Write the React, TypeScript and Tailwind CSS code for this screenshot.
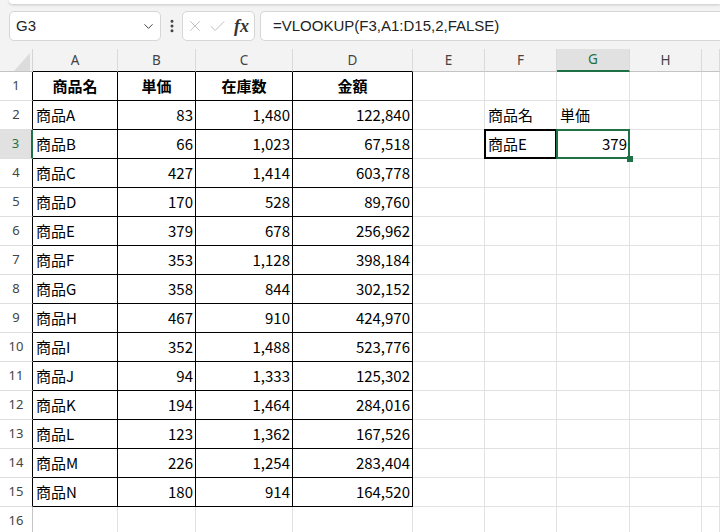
import React from 'react';
import { ChevronDown, EllipsisVertical, X, Check } from 'lucide-react';

// Sheet: VLOOKUP example

const COLS = ['A', 'B', 'C', 'D', 'E', 'F', 'G', 'H', ''];
const GRID = 'grid grid-cols-[33px_85px_78px_97px_120px_72px_72px_73px_72px_1fr]';

const DATA: [string, string, string, string][] = [
  ['商品A', '83', '1,480', '122,840'],
  ['商品B', '66', '1,023', '67,518'],
  ['商品C', '427', '1,414', '603,778'],
  ['商品D', '170', '528', '89,760'],
  ['商品E', '379', '678', '256,962'],
  ['商品F', '353', '1,128', '398,184'],
  ['商品G', '358', '844', '302,152'],
  ['商品H', '467', '910', '424,970'],
  ['商品I', '352', '1,488', '523,776'],
  ['商品J', '94', '1,333', '125,302'],
  ['商品K', '194', '1,464', '284,016'],
  ['商品L', '123', '1,362', '167,526'],
  ['商品M', '226', '1,254', '283,404'],
  ['商品N', '180', '914', '164,520'],
];

const FONT = "font-['Noto_Sans_CJK_JP','Noto_Sans',sans-serif]";

function FormulaBar() {
  return (
    <div className="h-[49px] flex flex-col">
      <div className="ml-[9px] h-[4px] bg-white rounded-bl-[6px] shadow-[0_1px_3px_rgba(0,0,0,0.18)]" />
      <div className="flex items-center mt-[7px] h-[30px]">
        <div className="ml-[9px] w-[152px] h-full bg-white border border-[#d6d6d6] rounded-[5px] flex items-center justify-between pl-[6px] pr-[4px]">
          <span className="text-[15px] text-[#222] font-['Liberation_Sans',sans-serif]">G3</span>
          <ChevronDown size={15} strokeWidth={1.6} className="text-[#444]" />
        </div>
        <div className="w-[21px] flex justify-center">
          <EllipsisVertical size={16} strokeWidth={2.5} className="text-[#444]" />
        </div>
        <div className="w-[73px] h-full bg-white border border-[#d6d6d6] rounded-[5px] flex items-center pl-[3px] gap-[4px]">
          <X size={18} strokeWidth={1.1} className="text-[#b5b5b5]" />
          <Check size={19} strokeWidth={1.1} className="text-[#b5b5b5]" />
          <span className="ml-[3px] text-[18px] italic font-bold text-[#333] font-['Liberation_Serif',serif] leading-none">fx</span>
        </div>
        <div className="ml-[5px] flex-1 h-full bg-white border border-r-0 border-[#d6d6d6] rounded-l-[5px] flex items-center pl-[12px]">
          <span className="text-[15px] text-[#222] font-['Liberation_Sans',sans-serif]">=VLOOKUP(F3,A1:D15,2,FALSE)</span>
        </div>
      </div>
    </div>
  );
}

function ColumnHeader() {
  return (
    <div className={`${GRID} h-[23px]`}>
      <div className="relative border-b border-[#c4c4c4] border-r border-r-[#d4d4d4] overflow-hidden">
        <div className="absolute left-[14px] bottom-0 w-0 h-0 border-l-[16px] border-l-transparent border-b-[18px] border-b-[#dcdcdc]" />
      </div>
      {COLS.map((c, i) => {
        const black = i < 4;
        const sel = c === 'G';
        return (
          <div
            key={i}
            className={`flex items-center justify-center text-[13.5px] font-['Noto_Sans',sans-serif] border-r border-r-[#dadada] ${
              sel
                ? 'bg-[#e1e1e1] text-[#1e7145] border-b-2 border-b-[#1e7145]'
                : black
                ? 'text-[#444] border-b border-b-black'
                : 'text-[#444] border-b border-b-[#c4c4c4]'
            }`}
          >
            {c}
          </div>
        );
      })}
    </div>
  );
}

function Cell({
  children,
  align = 'left',
  inTable,
  bold,
  overlay,
}: {
  children?: React.ReactNode;
  align?: 'left' | 'right' | 'center';
  inTable?: boolean;
  bold?: boolean;
  overlay?: 'black' | 'green';
}) {
  return (
    <div
      className={`relative flex items-center text-[15px] text-black whitespace-nowrap border-r border-b ${
        inTable ? 'border-black' : 'border-[#e1e1e1]'
      } ${align === 'right' ? 'justify-end pr-[2px]' : align === 'center' ? 'justify-center' : 'pl-[3px]'} ${
        bold ? 'font-bold' : ''
      }`}
    >
      {children}
      {overlay === 'black' && <div className="absolute inset-[-1px] border-2 border-black" />}
      {overlay === 'green' && (
        <div className="absolute z-10 inset-[-1px] border-2 border-[#1e7145]">
          <div className="absolute right-[-5px] bottom-[-5px] w-[6px] h-[6px] bg-[#1e7145]" />
        </div>
      )}
    </div>
  );
}

function Row({ n }: { n: number }) {
  const sel = n === 3;
  const inTable = n <= 15;
  const item = n >= 2 && n <= 15 ? DATA[n - 2] : null;

  return (
    <div className={`${GRID} h-[29px]`}>
      <div
        className={`flex items-center justify-center text-[13px] font-['Noto_Sans',sans-serif] border-b border-b-[#dedede] ${
          sel
            ? 'bg-[#e1e1e1] text-[#1e7145] border-r-2 border-r-[#1e7145]'
            : inTable
            ? 'text-[#444] border-r border-r-black'
            : 'text-[#444] border-r border-r-[#c4c4c4]'
        }`}
      >
        {n}
      </div>
      {n === 1 ? (
        <>
          <Cell inTable bold align="center">商品名</Cell>
          <Cell inTable bold align="center">単価</Cell>
          <Cell inTable bold align="center">在庫数</Cell>
          <Cell inTable bold align="center">金額</Cell>
        </>
      ) : item ? (
        <>
          <Cell inTable>{item[0]}</Cell>
          <Cell inTable align="right">{item[1]}</Cell>
          <Cell inTable align="right">{item[2]}</Cell>
          <Cell inTable align="right">{item[3]}</Cell>
        </>
      ) : (
        <>
          <Cell />
          <Cell />
          <Cell />
          <Cell />
        </>
      )}
      <Cell />
      {n === 2 ? (
        <>
          <Cell>商品名</Cell>
          <Cell>単価</Cell>
        </>
      ) : n === 3 ? (
        <>
          <Cell overlay="black">商品E</Cell>
          <Cell align="right" overlay="green">379</Cell>
        </>
      ) : (
        <>
          <Cell />
          <Cell />
        </>
      )}
      <Cell />
      <Cell />
    </div>
  );
}

export default function App() {
  return (
    <div className={`w-[720px] h-[532px] overflow-hidden bg-[#f3f3f3] ${FONT}`}>
      <FormulaBar />
      <ColumnHeader />
      <div className="bg-white">
        {Array.from({ length: 16 }, (_, i) => (
          <Row key={i} n={i + 1} />
        ))}
      </div>
    </div>
  );
}
